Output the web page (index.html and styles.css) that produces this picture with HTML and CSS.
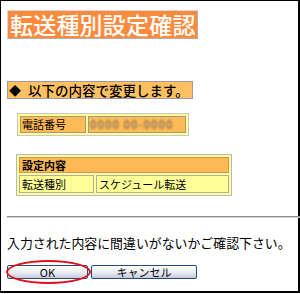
FILE: index.html
```html
<!DOCTYPE html>
<html lang="ja">
<head>
<meta charset="utf-8">
<link rel="stylesheet" href="styles.css">
</head>
<body>
<div class="frame">
  <div class="title">転送種別設定確認</div>
  <div class="heading"><span class="dia">◆</span>以下の内容で変更します。</div>
  <table class="phone">
    <tr><td class="lbl">電話番号</td><td class="val"><span class="blur">0000 00-0000</span></td></tr>
  </table>
  <table class="settings">
    <tr><th colspan="2">設定内容</th></tr>
    <tr><td class="k">転送種別</td><td class="v">スケジュール転送</td></tr>
  </table>
  <div class="rule"></div>
  <p class="msg">入力された内容に間違いがないかご確認下さい。</p>
  <div class="buttons">
    <button class="btn ok">OK</button>
    <button class="btn cancel">キャンセル</button>
    <div class="circle"></div>
  </div>
</div>
</body>
</html>
```
FILE: styles.css
```css
html, body { margin: 0; padding: 0; background: #fff; }
body { font-family: "Noto Sans CJK JP", "Liberation Sans", sans-serif; color: #000; }
.frame {
  box-sizing: border-box;
  width: 300px; height: 293px;
  border-top: 1px solid #000; border-left: 1px solid #000;
  border-right: 2px solid #000; border-bottom: 2px solid #000;
  padding: 9px 0 0 6px;
  display: flex; flex-direction: column; align-items: flex-start;
}
.title {
  background: #ff8a3d;
  color: #fff;
  font-size: 23px; line-height: 27px; font-weight: 500;
  padding: 0 1px 0 2px;
  border: 1px solid #b0b0b0;
  border-top-color: #d8d8d8; border-left-color: #d8d8d8;
  letter-spacing: 0.2px;
}
.heading {
  margin-top: 42px;
  box-sizing: border-box; width: 186px; height: 18px;
  background: #ffc062;
  border: 1px solid #9a9aa8;
  font-size: 13.5px; line-height: 16px; font-weight: 500;
  padding-left: 1px; white-space: nowrap;
}
.dia { display: inline-block; width: 19px; font-size: 12px; }
.phone {
  margin: 14px 0 0 10px;
  border-collapse: separate; border-spacing: 2px;
  background: #ffff9c;
  border: 1px solid #c8c8c8;
  width: 172px; height: 21px;
}
.phone td {
  background: #ffbb55;
  border: 1px solid #a89a7a;
  font-size: 11px; line-height: 13px; padding: 1px 1px;
}
.phone .lbl { width: 62px; }
.blur { color: #8a7a60; filter: blur(1.2px); letter-spacing: 1px; font-weight: bold; }
.settings {
  margin: 18px 0 0 9px;
  border-collapse: separate; border-spacing: 2px;
  background: #ffff9c;
  border: 1px solid #b8b8b8;
  width: 216px;
}
.settings th {
  background: #ffb955;
  border: 1px solid #c89a5a;
  text-align: left; font-weight: bold;
  font-size: 11px; line-height: 14px; padding: 0 2px;
}
.settings td {
  background: #ffff99;
  border: 1px solid #b0b0a0;
  font-size: 11px; line-height: 14px; padding: 1px 2px;
}
.settings .k { width: 69px; }
.rule {
  margin-top: 20px;
  align-self: stretch;
  height: 0; border-top: 1px solid #8c8c8c; border-bottom: 1px solid #d0d0d0;
  margin-right: -2px;
}
.msg {
  margin: 17px 0 0 0;
  font-size: 12.9px; line-height: 16px; white-space: nowrap;
}
.buttons {
  position: relative;
  margin-top: 14px;
  display: flex; gap: 3px;
}
.btn {
  box-sizing: border-box; height: 14px; padding: 0;
  border: 1px solid #1c4f7e; border-radius: 2px;
  background: linear-gradient(#ffffff, #eeeef4 50%, #c8c8dc);
  font-family: "Noto Sans CJK JP", "Liberation Sans", sans-serif;
  font-size: 11px; line-height: 12px; color: #000; font-weight: normal;
}
.ok { width: 81px; }
.cancel { width: 106px; }
.circle {
  position: absolute; left: -1px; top: -5px;
  width: 85px; height: 24px;
  border: 2px solid #e0101a; border-radius: 50%;
  box-sizing: border-box;
}
```
